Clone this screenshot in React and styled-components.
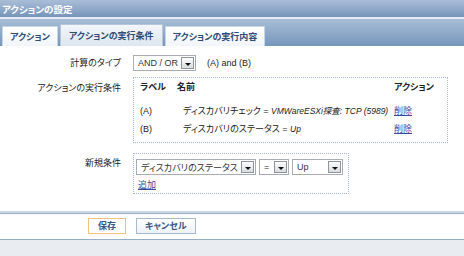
import React from "react";
import styled, { createGlobalStyle } from "styled-components";

const GlobalStyle = createGlobalStyle`
  html, body {
    margin: 0;
    padding: 0;
    background: #e9edf1;
  }
  body {
    font-family: "Liberation Sans", "Noto Sans CJK JP", sans-serif;
    font-size: 9px;
    font-feature-settings: "palt";
    color: #222;
  }
`;

const Page = styled.div`
  display: flex;
  flex-direction: column;
  width: 464px;
  min-height: 256px;
  background: #e9edf1;
`;

const TitleBar = styled.div`
  height: 17px;
  display: flex;
  align-items: center;
  padding-left: 2px;
  background: linear-gradient(#a9bdd6, #8ea8c8 55%, #7594b9);
  border-bottom: 2px solid #e3eaf2;
  color: #fff;
  font-weight: bold;
  font-size: 9.5px;
`;

const TabBar = styled.div`
  height: 27px;
  display: flex;
  align-items: flex-end;
  gap: 2px;
  padding-left: 2px;
  background: linear-gradient(#a9bdd5, #8aa6c7 60%, #7696bb);
`;

const Tab = styled.div`
  height: ${(p) => (p.$active ? 22 : 20)}px;
  box-sizing: border-box;
  display: flex;
  align-items: center;
  padding: 0 ${(p) => (p.$active ? 8 : 7)}px;
  border: 1px solid ${(p) => (p.$active ? "#b7c7da" : "#c8d5e3")};
  border-bottom: none;
  background: ${(p) =>
    p.$active
      ? "linear-gradient(#f3f6fa, #dde6ef)"
      : "linear-gradient(#ffffff, #f1f5f9)"};
  color: #2f4c77;
  font-weight: bold;
  font-size: 9px;
`;

const Content = styled.div`
  background: #fff;
  padding: 9px 0 17px;
  display: grid;
  grid-template-columns: 133px auto;
  align-items: start;
`;

const Label = styled.div`
  text-align: right;
  padding-right: 12px;
  line-height: 16px;
  margin-top: ${(p) => p.$top || 0}px;
`;

const Value = styled.div`
  display: flex;
  align-items: center;
  gap: 11px;
  margin-top: ${(p) => p.$top || 0}px;
`;

const SelectBox = styled.div`
  box-sizing: border-box;
  width: ${(p) => p.$w}px;
  height: 16px;
  display: flex;
  align-items: center;
  justify-content: space-between;
  padding: 0 1px 0 4px;
  border: 1px solid #a9adb3;
  background: #fff;
  color: #333;
  white-space: nowrap;
  overflow: hidden;
`;

const DropButton = styled.span`
  flex: none;
  box-sizing: border-box;
  width: 13px;
  height: 12px;
  display: flex;
  align-items: center;
  justify-content: center;
  border: 1px solid #8e959d;
  background: linear-gradient(#fdfdfd, #d9dcdf);
  &::after {
    content: "";
    border-left: 3px solid transparent;
    border-right: 3px solid transparent;
    border-top: 3px solid #111;
    margin-top: 2px;
  }
`;

const Frame = styled.div`
  box-sizing: border-box;
  width: ${(p) => p.$w}px;
  height: ${(p) => p.$h}px;
  border: 1px dotted #a9b6d3;
  padding: ${(p) => p.$pad};
`;

const Table = styled.div`
  display: grid;
  grid-template-columns: 37px 217px auto;
  grid-template-rows: 17px 25px 18px;
  align-items: end;
`;

const Head = styled.div`
  align-self: center;
  font-weight: bold;
`;

const Cell = styled.div`
  white-space: nowrap;
  line-height: 18px;
  padding-left: ${(p) => p.$pl || 0}px;
`;

const Link = styled.a`
  color: #3b4a9c;
  text-decoration: underline;
  cursor: pointer;
`;

const SelectRow = styled.div`
  display: flex;
  gap: 3px;
`;

const AddLink = styled(Link)`
  display: block;
  margin: 3px 0 0 2px;
`;

const Footer = styled.div`
  height: 26px;
  display: flex;
  align-items: center;
  gap: 10px;
  padding-left: 88px;
  background: #fff;
  border-top: 2px solid #cad6e2;
  box-shadow: inset 0 1px 0 #98aec6;
  border-bottom: 1px solid #98aec6;
`;

const Button = styled.button`
  box-sizing: border-box;
  height: 16px;
  padding: 0 ${(p) => (p.$primary ? 9 : 8)}px;
  border: 1px solid ${(p) => (p.$primary ? "#f2c27c" : "#a8bad0")};
  background: ${(p) =>
    p.$primary ? "#fff" : "linear-gradient(#ffffff, #eef2f7)"};
  color: #3a5885;
  font-family: "Noto Sans CJK JP", sans-serif;
  font-feature-settings: "palt";
  font-size: 9px;
  font-weight: bold;
  line-height: 14px;
`;

const Em = styled.i`
  font-style: italic;
  font-size: 8.5px;
`;

const conditions = [
  {
    label: "(A)",
    name: (
      <>
        ディスカバリチェック = <Em>VMWareESXi探査: TCP (5989)</Em>
      </>
    ),
  },
  {
    label: "(B)",
    name: (
      <>
        ディスカバリのステータス = <Em>Up</Em>
      </>
    ),
  },
];

export default function App() {
  return (
    <Page>
      <GlobalStyle />
      <TitleBar>アクションの設定</TitleBar>
      <TabBar>
        <Tab>アクション</Tab>
        <Tab $active>アクションの実行条件</Tab>
        <Tab>アクションの実行内容</Tab>
      </TabBar>

      <Content>
        <Label>計算のタイプ</Label>
        <Value>
          <SelectBox $w={63}>
            AND / OR
            <DropButton />
          </SelectBox>
          <span>(A) and (B)</span>
        </Value>

        <Label $top={9}>アクションの実行条件</Label>
        <Value $top={6}>
          <Frame $w={315} $h={66} $pad="0 0 0 6px">
            <Table>
              <Head>ラベル</Head>
              <Head>名前</Head>
              <Head>アクション</Head>
              {conditions.map((c) => (
                <React.Fragment key={c.label}>
                  <Cell>{c.label}</Cell>
                  <Cell $pl={6}>{c.name}</Cell>
                  <Cell>
                    <Link>削除</Link>
                  </Cell>
                </React.Fragment>
              ))}
            </Table>
          </Frame>
        </Value>

        <Label $top={12}>新規条件</Label>
        <Value $top={10}>
          <Frame $w={216} $h={41} $pad="5px 2px 0">
            <SelectRow>
              <SelectBox $w={120}>
                ディスカバリのステータス
                <DropButton />
              </SelectBox>
              <SelectBox $w={30}>
                =
                <DropButton />
              </SelectBox>
              <SelectBox $w={51}>
                Up
                <DropButton />
              </SelectBox>
            </SelectRow>
            <AddLink>追加</AddLink>
          </Frame>
        </Value>
      </Content>

      <Footer>
        <Button $primary>保存</Button>
        <Button>キャンセル</Button>
      </Footer>
    </Page>
  );
}
